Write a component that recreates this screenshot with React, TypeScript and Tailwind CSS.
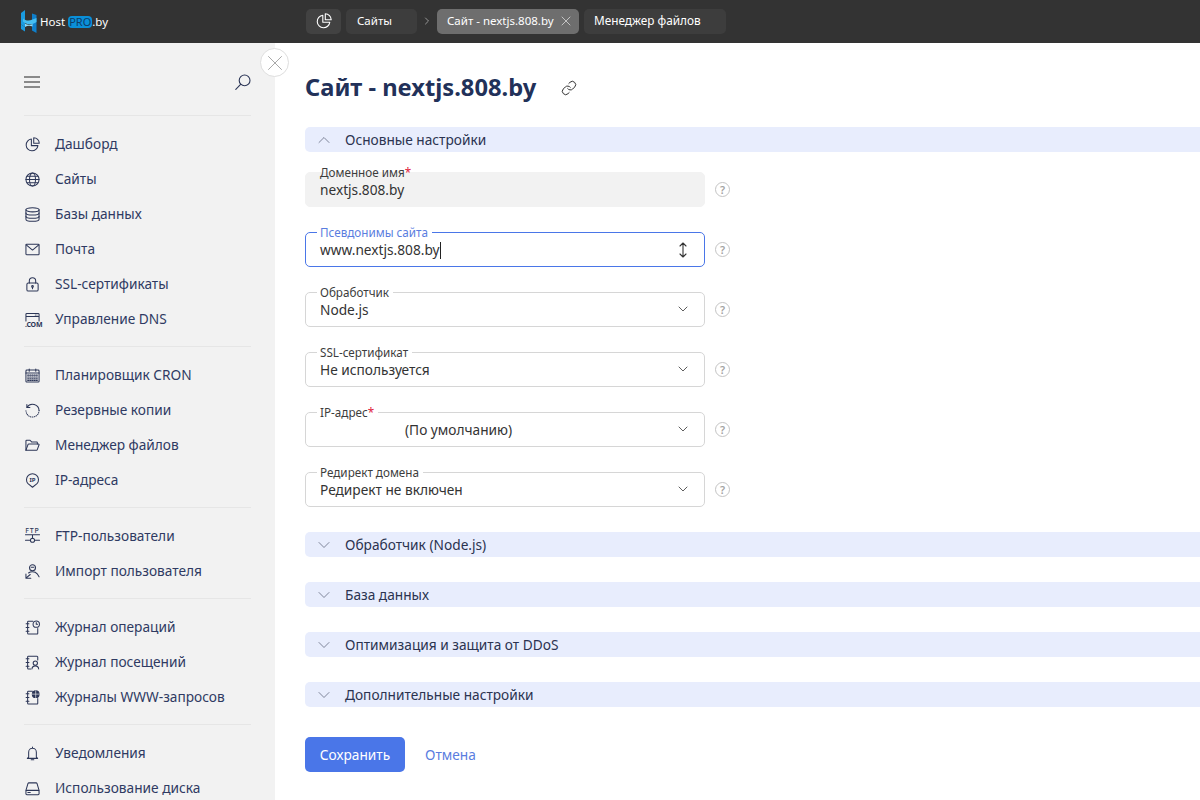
import React from 'react';
import { ChevronDown, ChevronRight, ChevronUp, Link, X } from 'lucide-react';

const ic = { fill: 'none', stroke: 'currentColor', strokeWidth: 1.1, strokeLinecap: 'round', strokeLinejoin: 'round' } as const;

function Svg({ children, className = 'w-[15px] h-[15px]' }: { children: React.ReactNode; className?: string }) {
  return (
    <svg viewBox="0 0 16 16" className={className} {...ic}>
      {children}
    </svg>
  );
}

const PieIcon = ({ className }: { className?: string }) => (
  <Svg className={className}>
    <path d="M6.8 2.2a6.3 6.3 0 1 0 7 7H6.8z" />
    <path d="M9.3.8v5.9h5.9A5.9 5.9 0 0 0 9.3.8z" />
  </Svg>
);
const GlobeIcon = () => (
  <Svg>
    <circle cx="8" cy="8" r="7" />
    <ellipse cx="8" cy="8" rx="3.2" ry="7" />
    <path d="M1 8h14M2 4.5h12M2 11.5h12" />
  </Svg>
);
const DbIcon = () => (
  <Svg>
    <ellipse cx="8" cy="3" rx="7" ry="2.2" />
    <path d="M1 3v10c0 1.2 3.1 2.2 7 2.2s7-1 7-2.2V3" />
    <path d="M1 6.4c0 1.2 3.1 2.2 7 2.2s7-1 7-2.2M1 9.8c0 1.2 3.1 2.2 7 2.2s7-1 7-2.2" />
  </Svg>
);
const MailIcon = () => (
  <Svg>
    <rect x="1" y="2.5" width="14" height="11" rx="0.8" />
    <path d="M1.3 3l6.7 5.6L14.7 3" />
  </Svg>
);
const LockIcon = () => (
  <Svg>
    <rect x="2" y="6.5" width="12" height="8.5" rx="1.5" />
    <path d="M4.6 6.5V4.2a3.4 3.4 0 0 1 6.8 0v2.3" />
    <circle cx="8" cy="10" r="0.9" />
    <path d="M8 10.8v1.6" />
  </Svg>
);
const ComIcon = () => (
  <span className="relative block w-[15px] h-[15px]">
    <Svg>
      <path d="M1 9.5V2.5a1 1 0 0 1 1-1h12a1 1 0 0 1 1 1v7M1 4.8h14" />
      <path d="M11 3.2h.1M12.7 3.2h.1" />
    </Svg>
    <span className="absolute left-0 top-[9px] text-[7px] leading-[8px] font-bold tracking-[-0.2px]">.COM</span>
  </span>
);
const CalIcon = () => (
  <Svg>
    <rect x="1" y="2.2" width="14" height="12.8" rx="1" />
    <path d="M1 5.4h14M4.5 1v2.4M11.5 1v2.4" />
    <path strokeDasharray="1.2 1.1" d="M2.8 7.6h10.6M2.8 9.6h10.6M2.8 11.6h10.6M2.8 13.4h10.6" />
  </Svg>
);
const BackupIcon = () => (
  <Svg>
    <path d="M2.2 4.5A7 7 0 0 1 15 8" />
    <path d="M2 1.5v3.2h3.2" />
    <path strokeDasharray="0.6 1.5" d="M15 8a7 7 0 0 1-14 0" />
  </Svg>
);
const FolderIcon = () => (
  <Svg>
    <path d="M1 13V3.2a.8.8 0 0 1 .8-.8h3.6l1.6 1.8h5.4a.8.8 0 0 1 .8.8v1.4" />
    <path d="M1 13l2.3-6.2a.8.8 0 0 1 .7-.4h10.4a.6.6 0 0 1 .6.8L13 12.6a.6.6 0 0 1-.6.4z" />
  </Svg>
);
const PinIcon = () => (
  <span className="relative block w-[15px] h-[15px]">
    <Svg>
      <path d="M8 15.2L3.2 11.4a6.4 6.4 0 1 1 9.6 0z" />
    </Svg>
    <span className="absolute inset-x-0 top-[3px] text-center text-[6px] leading-[8px] font-bold">IP</span>
  </span>
);
const FtpIcon = () => (
  <span className="relative block w-[15px] h-[15px]">
    <span className="absolute inset-x-0 top-[-2px] text-center text-[7px] leading-[8px] font-medium tracking-[0.8px]">FTP</span>
    <Svg>
      <path d="M0.5 6.2h15M0.5 12h5M10.5 12h5M8 6.2v3.6" />
      <circle cx="8" cy="12" r="2.2" />
    </Svg>
  </span>
);
const ImportUserIcon = () => (
  <Svg>
    <circle cx="8" cy="4" r="3.2" />
    <path d="M6.6 3.4h2.8" />
    <path d="M3.8 9.6C5 8.6 6.4 8.3 8 8.3c2.4 0 4 .9 5 2.2l2 3.2" />
    <path d="M1 10.8v4.4h5.2M1.6 14.6l4-3.4" />
  </Svg>
);
const JournalClockIcon = () => (
  <Svg>
    <path d="M8.5 1.4H3.6a.8.8 0 0 0-.8.8v12a.8.8 0 0 0 .8.8h9.2a.8.8 0 0 0 .8-.8V9" />
    <path d="M1.2 4h3M1.2 8h3M1.2 12h3" />
    <circle cx="12" cy="4.4" r="3.4" />
    <path d="M12 2.8v1.8h1.4" />
  </Svg>
);
const JournalUserIcon = () => (
  <Svg>
    <path d="M6 15H3.6a.8.8 0 0 1-.8-.8v-12a.8.8 0 0 1 .8-.8h9.2a.8.8 0 0 1 .8.8v3" />
    <path d="M1.2 4h3M1.2 8h3M1.2 12h3" />
    <circle cx="11" cy="8.6" r="2.3" />
    <path d="M7.4 15c.2-2.2 1.7-3.4 3.6-3.4s3.4 1.2 3.6 3.4" />
  </Svg>
);
const JournalGlobeIcon = () => (
  <Svg>
    <path d="M8 1.4H3.6a.8.8 0 0 0-.8.8v12a.8.8 0 0 0 .8.8h9.2a.8.8 0 0 0 .8-.8V9" />
    <path d="M1.2 4h3M1.2 8h3M1.2 12h3" />
    <circle cx="11.4" cy="4.4" r="3.6" fill="currentColor" />
    <path stroke="#f2f2f2" strokeWidth="0.7" d="M7.8 4.4h7.2M11.4.8v7.2" />
  </Svg>
);
const BellIcon = () => (
  <Svg>
    <path d="M8 1v1.2M3.9 11.8V6.6a4.1 4.1 0 0 1 8.2 0v5.2l1.4 1.4h-11z" />
    <path d="M6.6 14.6h2.8" />
  </Svg>
);
const DiskIcon = () => (
  <Svg>
    <path d="M1 10l2.2-7.4a1 1 0 0 1 .9-.6h7.8a1 1 0 0 1 .9.6L15 10" />
    <rect x="1" y="10" width="14" height="4.6" rx="1" />
    <path d="M3 12.3h2.6" />
  </Svg>
);

const navGroups: { icon: React.ReactNode; label: string }[][] = [
  [
    { icon: <PieIcon />, label: 'Дашборд' },
    { icon: <GlobeIcon />, label: 'Сайты' },
    { icon: <DbIcon />, label: 'Базы данных' },
    { icon: <MailIcon />, label: 'Почта' },
    { icon: <LockIcon />, label: 'SSL-сертификаты' },
    { icon: <ComIcon />, label: 'Управление DNS' },
  ],
  [
    { icon: <CalIcon />, label: 'Планировщик CRON' },
    { icon: <BackupIcon />, label: 'Резервные копии' },
    { icon: <FolderIcon />, label: 'Менеджер файлов' },
    { icon: <PinIcon />, label: 'IP-адреса' },
  ],
  [
    { icon: <FtpIcon />, label: 'FTP-пользователи' },
    { icon: <ImportUserIcon />, label: 'Импорт пользователя' },
  ],
  [
    { icon: <JournalClockIcon />, label: 'Журнал операций' },
    { icon: <JournalUserIcon />, label: 'Журнал посещений' },
    { icon: <JournalGlobeIcon />, label: 'Журналы WWW-запросов' },
  ],
  [
    { icon: <BellIcon />, label: 'Уведомления' },
    { icon: <DiskIcon />, label: 'Использование диска' },
  ],
];

function Logo() {
  return (
    <div className="flex items-center ml-[20px]">
      <svg viewBox="0 0 17 23" className="w-[17px] h-[23px]">
        <path fill="#1a9be0" d="M1 3L5 0V17L1 14.5z" />
        <path fill="#0f7fcb" d="M12 3.5L16.5 5V23L12 20.5z" />
        <path fill="#45bdf0" d="M3 8.5C6 11 9 11 12.5 9.5L16.5 8V12C12.5 15 8 15 5 13L3 11.5z" />
        <path fill="#8fdcf8" d="M5 13.5C8 15.5 10.5 15 12.5 14V16.5C10 15.5 7.5 15.5 5 17z" />
        <path fill="#1a9be0" d="M1 14.5L5 17V21.5L1 19z" />
      </svg>
      <span className="ml-[3px] text-[11.5px] leading-none text-white flex items-center">
        Host
        <span className="ml-[3px] rounded-[4px] bg-[#0a8fd8] px-[1px] text-[#0d3c68] leading-[12px] h-[12px] text-[11px]">PRO</span>
        .by
      </span>
    </div>
  );
}

function TopBar() {
  return (
    <header className="h-[43px] bg-[#333333] flex items-center shrink-0">
      <div className="w-[306px] shrink-0">
        <Logo />
      </div>
      <div className="flex items-center text-[11.5px] text-white pb-[1px]">
        <div className="w-[35px] h-[25px] rounded-[5px] bg-[#424242] flex items-center justify-center">
          <PieIcon className="w-[16px] h-[16px]" />
        </div>
        <div className="ml-[5px] w-[71px] h-[25px] rounded-[5px] bg-[#3d3d3d] flex items-center pl-[11px]">Сайты</div>
        <ChevronRight className="w-[12px] h-[12px] mx-[4px] text-[#b5b5b5]" strokeWidth={1.5} />
        <div className="w-[142px] h-[25px] rounded-[5px] bg-[#6e6e6e] flex items-center pl-[10px] justify-between pr-[5px]">
          Сайт - nextjs.808.by
          <X className="w-[16px] h-[16px] text-[#e2e2e2]" strokeWidth={1.1} />
        </div>
        <div className="ml-[5px] w-[142px] h-[25px] rounded-[5px] bg-[#3d3d3d] flex items-center pl-[10px] text-[11.8px]">Менеджер файлов</div>
      </div>
    </header>
  );
}

function Sidebar() {
  return (
    <aside className="w-[275px] shrink-0 bg-[#f2f2f2] px-[24px] relative text-[#2c3657]">
      <div className="h-[73px] border-b border-[#e6e6e6] flex items-center justify-between pt-[5px]">
        <svg viewBox="0 0 16 12" className="w-[16px] h-[12px] text-[#222]" fill="none" stroke="currentColor" strokeWidth="1">
          <path d="M0 1h16M0 6h16M0 11h16" />
        </svg>
        <svg viewBox="0 0 16 16" className="w-[16px] h-[16px]" fill="none" stroke="currentColor" strokeWidth="1.1" strokeLinecap="round">
          <circle cx="9.6" cy="6.4" r="5.4" />
          <path d="M5.6 10.4L.8 15.4" />
        </svg>
      </div>
      {navGroups.map((group, i) => (
        <div key={i} className={i < navGroups.length - 1 ? 'pt-[10.5px] pb-[9.5px] border-b border-[#e6e6e6]' : 'pt-[10.5px]'}>
          {group.map((item) => (
            <div key={item.label} className="h-[35px] flex items-center gap-[15px] pl-[1px]">
              <span className="w-[15px] h-[15px] shrink-0 flex">{item.icon}</span>
              <span className="text-[13.7px] text-[#2f3a62] whitespace-nowrap">{item.label}</span>
            </div>
          ))}
        </div>
      ))}
    </aside>
  );
}

function Help() {
  return (
    <span className="ml-[10px] w-[15px] h-[15px] rounded-full border-[1.5px] border-[#c4c4c4] text-[#a3a3a3] text-[11px] font-semibold flex items-center justify-center leading-none">
      ?
    </span>
  );
}

function Field({
  label,
  required,
  value,
  variant = 'select',
}: {
  label: string;
  required?: boolean;
  value: React.ReactNode;
  variant?: 'select' | 'disabled' | 'focus';
}) {
  const box =
    variant === 'disabled'
      ? 'bg-[#f2f2f2] border-[#f2f2f2]'
      : variant === 'focus'
        ? 'bg-white border-[#4a76e8]'
        : 'bg-white border-[#d6d6d6]';
  return (
    <div className="flex items-center">
      <div className={`relative w-[400px] h-[35px] rounded-[5px] border ${box} flex items-center pl-[14px] pr-[13px]`}>
        <span
          className={`absolute left-[11px] -top-[8px] px-[3px] pr-[4px] text-[11.7px] leading-[14px] ${
            variant === 'disabled' ? 'bg-transparent' : 'bg-white'
          } ${variant === 'focus' ? 'text-[#5a7de0]' : 'text-[#3d3d3d]'}`}
        >
          {label}
          {required && <span className="text-[#e0203c]">*</span>}
        </span>
        <span className="flex-1 text-[13.7px] text-[#333333] whitespace-nowrap pt-[2px]">{value}</span>
        {variant === 'select' && <ChevronDown className="w-[16px] h-[16px] text-[#444] -mt-[1px]" strokeWidth={1.3} />}
        {variant === 'focus' && (
          <svg viewBox="0 0 14 16" className="w-[14px] h-[16px] mr-[1px] text-[#333]" fill="none" stroke="currentColor" strokeWidth="1.1" strokeLinecap="round" strokeLinejoin="round">
            <path d="M7 1v14M4 4l3-3 3 3M4 12l3 3 3-3" />
          </svg>
        )}
      </div>
      <Help />
    </div>
  );
}

function SectionBar({ title, open }: { title: string; open?: boolean }) {
  const Icon = open ? ChevronUp : ChevronDown;
  return (
    <div className="h-[25px] rounded-l-[5px] bg-[#e8edfd] flex items-center pl-[9px] shrink-0">
      <Icon className="w-[20px] h-[20px] text-[#5a6078]" strokeWidth={0.9} />
      <span className="ml-[11px] text-[13.7px] text-[#2b3350] whitespace-nowrap pt-[2px]">{title}</span>
    </div>
  );
}

export default function App() {
  return (
    <div className="w-[1200px] h-[800px] overflow-hidden flex flex-col bg-white font-['Noto_Sans',sans-serif]">
      <TopBar />
      <div className="flex flex-1 min-h-0 relative">
        <Sidebar />
        <button className="absolute left-[260px] top-[5px] w-[29px] h-[29px] rounded-full bg-white border border-[#dedede] flex items-center justify-center">
          <X className="w-[26px] h-[26px] text-[#9a9a9a]" strokeWidth={0.8} />
        </button>
        <main className="flex-1 pl-[30px] min-w-0">
          <div className="h-[84px] flex items-center pt-[6px]">
            <h1 className="text-[23.7px] font-bold text-[#223159] leading-none">Сайт - nextjs.808.by</h1>
            <Link className="ml-[25px] w-[16px] h-[16px] text-[#333]" strokeWidth={1.5} />
          </div>
          <SectionBar title="Основные настройки" open />
          <div className="pt-[20px] pb-[25px] flex flex-col gap-[25px]">
            <Field label="Доменное имя" required value="nextjs.808.by" variant="disabled" />
            <Field
              label="Псевдонимы сайта"
              variant="focus"
              value={
                <>
                  www.nextjs.808.by
                  <span className="inline-block w-[1px] h-[17px] bg-[#222] align-[-4px]" />
                </>
              }
            />
            <Field label="Обработчик" value="Node.js" />
            <Field label="SSL-сертификат" value="Не используется" />
            <Field label="IP-адрес" required value={<span className="ml-[85px]">(По умолчанию)</span>} />
            <Field label="Редирект домена" value="Редирект не включен" />
          </div>
          <div className="flex flex-col gap-[25px]">
            <SectionBar title="Обработчик (Node.js)" />
            <SectionBar title="База данных" />
            <SectionBar title="Оптимизация и защита от DDoS" />
            <SectionBar title="Дополнительные настройки" />
          </div>
          <div className="mt-[30px] flex items-center">
            <button className="w-[100px] h-[35px] rounded-[5px] bg-[#4a76e8] text-white text-[13.7px] pt-[2px]">Сохранить</button>
            <span className="ml-[20px] text-[13.7px] text-[#5a7de0] pt-[2px]">Отмена</span>
          </div>
        </main>
      </div>
    </div>
  );
}
